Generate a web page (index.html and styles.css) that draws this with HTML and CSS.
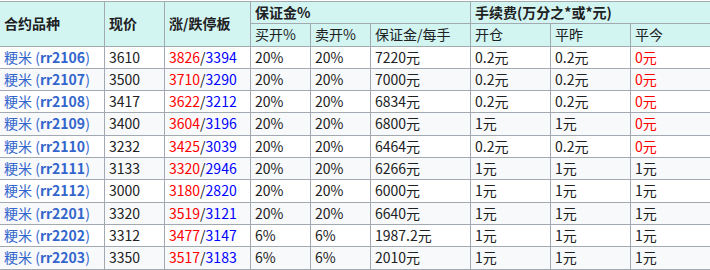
FILE: index.html
```html
<!DOCTYPE html>
<html lang="zh-CN">
<head>
<meta charset="utf-8">
<link rel="stylesheet" href="styles.css">
</head>
<body>
<table class="tbl">
<colgroup>
<col class="c1"><col class="c2"><col class="c3"><col class="c4"><col class="c5"><col class="c6"><col class="c7"><col class="c8"><col class="c9">
</colgroup>
<thead>
<tr><th rowspan="2">合约品种</th><th rowspan="2">现价</th><th rowspan="2">涨/跌停板</th><th colspan="3">保证金%</th><th colspan="3">手续费(万分之*或*元)</th></tr>
<tr><td class="sub">买开%</td><td class="sub">卖开%</td><td class="sub">保证金/每手</td><td class="sub">开仓</td><td class="sub">平昨</td><td class="sub">平今</td></tr>
</thead>
<tbody>
<tr><td><a class="lk">粳米 (<b>rr2106</b>)</a></td><td>3610</td><td><span class="up">3826</span>/<span class="dn">3394</span></td><td>20%</td><td>20%</td><td>7220元</td><td>0.2元</td><td>0.2元</td><td class="up">0元</td></tr>
<tr><td><a class="lk">粳米 (<b>rr2107</b>)</a></td><td>3500</td><td><span class="up">3710</span>/<span class="dn">3290</span></td><td>20%</td><td>20%</td><td>7000元</td><td>0.2元</td><td>0.2元</td><td class="up">0元</td></tr>
<tr><td><a class="lk">粳米 (<b>rr2108</b>)</a></td><td>3417</td><td><span class="up">3622</span>/<span class="dn">3212</span></td><td>20%</td><td>20%</td><td>6834元</td><td>0.2元</td><td>0.2元</td><td class="up">0元</td></tr>
<tr><td><a class="lk">粳米 (<b>rr2109</b>)</a></td><td>3400</td><td><span class="up">3604</span>/<span class="dn">3196</span></td><td>20%</td><td>20%</td><td>6800元</td><td>1元</td><td>1元</td><td class="up">0元</td></tr>
<tr><td><a class="lk">粳米 (<b>rr2110</b>)</a></td><td>3232</td><td><span class="up">3425</span>/<span class="dn">3039</span></td><td>20%</td><td>20%</td><td>6464元</td><td>0.2元</td><td>0.2元</td><td class="up">0元</td></tr>
<tr><td><a class="lk">粳米 (<b>rr2111</b>)</a></td><td>3133</td><td><span class="up">3320</span>/<span class="dn">2946</span></td><td>20%</td><td>20%</td><td>6266元</td><td>1元</td><td>1元</td><td>1元</td></tr>
<tr><td><a class="lk">粳米 (<b>rr2112</b>)</a></td><td>3000</td><td><span class="up">3180</span>/<span class="dn">2820</span></td><td>20%</td><td>20%</td><td>6000元</td><td>1元</td><td>1元</td><td>1元</td></tr>
<tr><td><a class="lk">粳米 (<b>rr2201</b>)</a></td><td>3320</td><td><span class="up">3519</span>/<span class="dn">3121</span></td><td>20%</td><td>20%</td><td>6640元</td><td>1元</td><td>1元</td><td>1元</td></tr>
<tr><td><a class="lk">粳米 (<b>rr2202</b>)</a></td><td>3312</td><td><span class="up">3477</span>/<span class="dn">3147</span></td><td>6%</td><td>6%</td><td>1987.2元</td><td>1元</td><td>1元</td><td>1元</td></tr>
<tr><td><a class="lk">粳米 (<b>rr2203</b>)</a></td><td>3350</td><td><span class="up">3517</span>/<span class="dn">3183</span></td><td>6%</td><td>6%</td><td>2010元</td><td>1元</td><td>1元</td><td>1元</td></tr>
</tbody>
</table>
</body>
</html>
```
FILE: styles.css
```css
html, body { margin: 0; padding: 0; background: #ffffff; }
body {
  font-family: "Noto Sans CJK SC", "Noto Sans", sans-serif;
  font-size: 14px;
  color: #202122;
}
.tbl {
  border-collapse: collapse;
  table-layout: fixed;
  width: 712px;
  margin: 1px 0 0 -1px;
}
.c1 { width: 105px; }
.c2 { width: 60px; }
.c3 { width: 86px; }
.c4 { width: 60px; }
.c5 { width: 60px; }
.c6 { width: 100px; }
.c7 { width: 80px; }
.c8 { width: 80px; }
.c9 { width: 81px; }
.tbl th, .tbl td {
  border: 1px solid #a2a9b1;
  padding: 1px 3px 1px 4px;
  line-height: 19.3px;
  text-align: left;
  white-space: nowrap;
  overflow: hidden;
}
.tbl thead th, .tbl thead td { background: #d3f5f2; }
.tbl th { font-weight: bold; }
.tbl tbody tr:nth-child(even) td { background: #f8f9fa; }
.lk { color: #3366cc; }
.up { color: #ff0000; }
.dn { color: #0000ff; }
```
